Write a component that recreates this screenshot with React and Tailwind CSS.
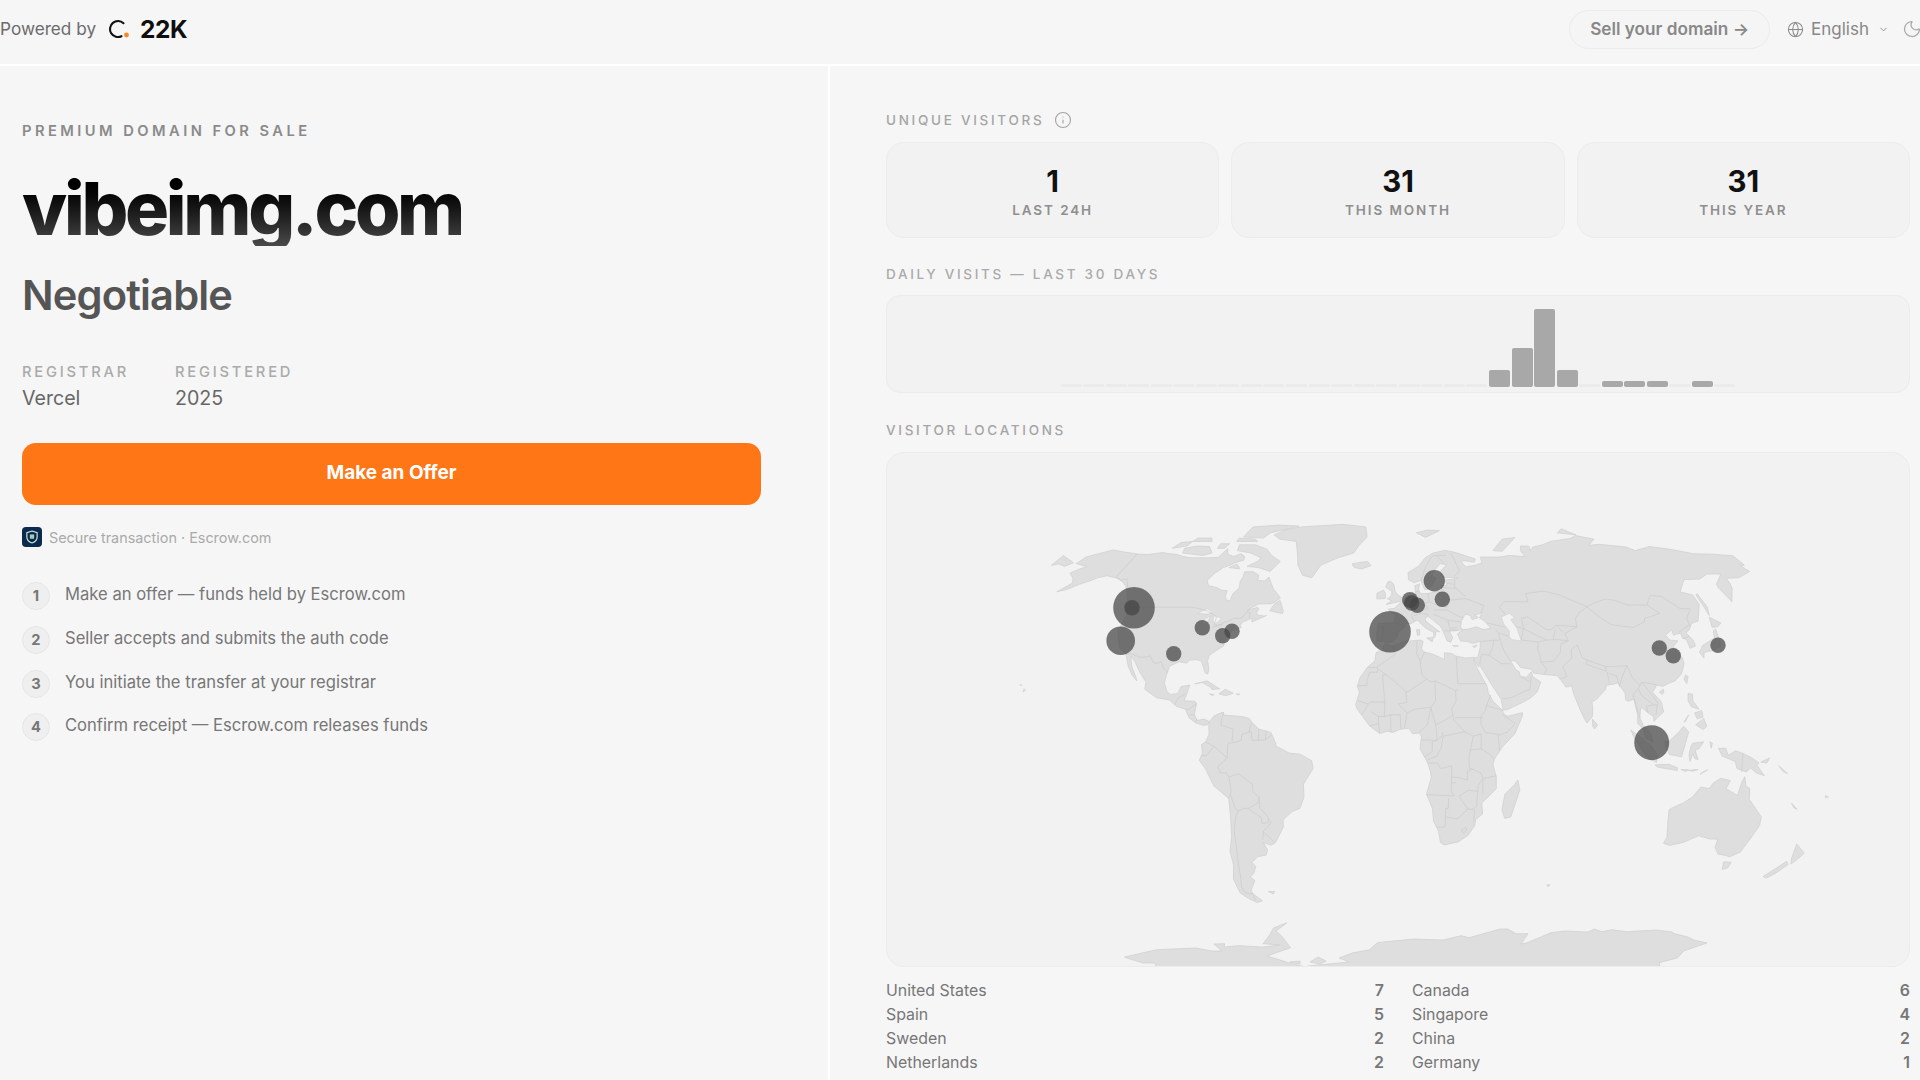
import React from "react";
import { Globe, ChevronDown, Moon, Info } from "lucide-react";

// coastlines as "lon,lat" lists, projected at runtime
const LAND = [
  // North America
  "-168,65.6 -166.8,68.3 -163,69.5 -156.5,71.3 -150,70.5 -141,69.6 -135,69.3 -128,70.2 -124,69.7 -120,69.5 -115,68.5 -110,68 -105,68 -100,68 -96,68.2 -94,71.8 -92,69.5 -88,68.5 -85,69.7 -82,68.5 -81.5,67 -85.5,66 -87,65 -90,64 -93,61.5 -94.5,59 -92.5,57 -88,56.3 -85,55.3 -82.3,55.1 -82,53 -80.5,51.3 -79,51.5 -79,54 -77,56 -78,58.7 -77.5,60.5 -78,62.4 -73.5,62.4 -70,61 -69.5,59 -66,58.8 -64.5,60.3 -62,57.5 -60,55.5 -57,53.5 -55.7,52.3 -59,50.3 -65,50.2 -67,49.3 -69.5,47.8 -65,49 -64.3,48.3 -65,47 -64,46.2 -61,45.8 -60,46 -63.5,44.6 -66,43.7 -66,45 -67,44.8 -70,43.7 -70.7,42.5 -70,41.7 -74,40.6 -75,38.5 -76,37 -75.7,35.3 -78,33.9 -81,32 -81.3,30 -80,27 -80.3,25.3 -81.5,25.9 -82.7,28 -84,30 -86,30.4 -89,30.3 -90,29.2 -93.5,29.7 -97,28 -97.5,25 -97.8,22.3 -96,19 -94.5,18.2 -91.5,18.5 -90.5,21 -87,21.5 -87.7,18.5 -88.5,16 -84,15.8 -83.2,14.9 -83.7,11 -82.3,9 -79.7,9.5 -77.4,8.7 -78,7.5 -80,7.3 -83,8.2 -85.8,10 -87.6,13 -91.5,14 -94.5,16.2 -100,17 -105.5,20 -105.5,22.5 -109,26 -112.5,30 -114.7,31.7 -113,28 -110,24 -109.5,23 -112,25 -114.5,28 -117.1,32.5 -120.6,34.5 -122.5,37.5 -124.3,40.4 -124,46 -124.7,48.4 -123,49 -127,51 -130,54.5 -133,57 -136,58.5 -140,59.8 -146,60.8 -150,60 -152,59 -156,57.5 -160,55.5 -164,54.7 -160,58 -162,59.8 -166,61.8 -164,63.2 -161,64.5",
  // Chukotka, the bit of Russia past the date line
  "-179.9,64.9 -179.9,68.9 -175,67.5 -170,66 -172.5,64.5 -177,65.5",
  // Greenland and the Arctic islands
  "-73,78 -68,80.5 -60,82 -35,83.5 -20,82 -18,77 -22,73 -24,70 -32,68 -40,65 -43,60 -48,61 -52,65 -54,69 -58,75 -68,76",
  "-80,73.5 -72,71.5 -68,69 -62,66.5 -65,62.5 -72,64 -78,64.5 -74,66.5 -73,68 -80,70 -88,71 -89,73.5",
  "-117,70 -105,69 -101,70 -105,72.7 -112,73 -118,72",
  "-125,72 -118,73 -117,75 -123,74.5",
  "-90,77 -78,76.5 -76,79 -65,81.5 -62,82.5 -75,83 -90,82 -90,80",
  "-92,75 -80,75 -82,76 -92,76.5",
  "-117,75 -106,75 -108,76.5 -116,76.5",
  "-100,72 -96,72 -95,74 -100,74",
  "-87,64 -81,63.5 -84,65.5",
  "-59,47.7 -53,46.7 -52.7,47.5 -55.5,51.5 -57.5,50.5",
  "-128,50.5 -123.5,48.5 -125,50",
  "-155.9,19.2 -155,19.6 -155.8,20.2",
  "-158,21.5 -157,21.3 -157.6,21.7",
  "-85,21.9 -80,23 -75,20.5 -74.2,20.2 -77.5,19.9 -78,20.7 -82,22.4",
  "-74.4,18.4 -72,20 -68.4,18.6 -71.5,17.7",
  "-78.3,18.4 -76.3,18.1 -77,17.8",
  "-67.2,18.4 -65.7,18.3 -66.5,18",
  // South America
  "-77.4,8.7 -75.5,10.7 -72,12 -71.5,10.9 -68,10.7 -64,10.4 -61,9.7 -60,8.4 -57,6 -52,4.8 -50,1 -50,0 -44.5,-2.5 -40,-2.9 -35.3,-5.2 -34.8,-8 -39,-13.5 -39,-18 -41,-22 -44.5,-23.2 -48.5,-26 -48.7,-28.5 -53,-34 -55,-34.9 -58.3,-34 -57,-36.5 -58,-38.4 -62,-39 -65,-41 -63.7,-42.5 -65.5,-45 -67.5,-46.2 -65.8,-47.5 -69,-51 -68.4,-52.5 -65.2,-54.9 -68,-55.6 -71.5,-54 -74.5,-52 -75.5,-47 -73.5,-42 -73.5,-37 -71.5,-32 -70.5,-25 -70.3,-18.5 -76,-14 -79,-8 -81.3,-5 -80,-2.5 -80.3,0.5 -78.7,1.5 -77.3,4 -77.5,7",
  "-61,-51.5 -58,-51.5 -59,-52.3",
  // Africa and nearby islands
  "-5.9,35.8 -2,35.2 3,36.8 10,37.3 11,36.9 10.2,34.3 11,33.2 15.2,32.3 19.8,30.5 20,32.8 23,32.6 25,31.6 29,31 32.5,31.2 32.5,29.9 33.8,27 35.5,24 37.2,21 37.5,18.7 39.5,15.5 43.2,12.5 43.3,11.5 45,10.5 51.2,11.8 51,10.4 47.9,4.5 42.5,-0.5 39.5,-4.5 38.9,-6.5 40.4,-11 40.6,-15 36.5,-18.8 34.9,-20 35.5,-24 32.8,-25.9 32.6,-28 30,-31.5 26,-33.8 20,-34.8 18.4,-34 17.3,-30 15,-26.5 14.4,-22 11.8,-17 13.7,-11 13.2,-8.8 12.2,-6 9,-1 9.6,3.5 8.5,4.6 6,4.3 4.4,6.3 1,5.9 -2,4.8 -4.5,5.2 -7.5,4.4 -11.5,7 -13.3,9 -15,11 -16.8,13 -17.5,14.7 -16,19 -17,21 -16,24 -13,27.7 -9.8,30 -9.5,32.8 -6.8,34",
  "49.3,-12 50.4,-15.5 47.5,-25 45,-25.5 43.5,-22.5 44.3,-17 48,-13.7",
  "69,-49 70.5,-49 70,-49.7",
  // Eurasia
  "-9.5,38.8 -8.9,43.2 -1.8,43.4 -1.2,46 -4.6,48.3 -1.6,48.6 1.6,50.9 4,52 5,53.3 8.5,53.8 8.2,57 10.6,57.7 10,55.5 10.8,54 14,54 18.5,54.7 21,55.2 21.2,57 24,57.2 23.5,59.2 28,59.6 30,60 25,60.2 22.5,60 21.5,62.5 25.3,65.2 22,65.6 17.5,62 17.2,60.6 19,59.8 16.5,57 14.3,55.5 12.9,55.5 11.2,59 8,58.1 5.3,59.2 5,62 10.5,64.5 14.5,68 19,70 25.7,71.1 31,70.3 41,67.5 40,66.2 35,66.8 33,66.7 35,64.3 38,64.7 40.5,65 44,66 44,68.3 54,68.3 60,69 68,68.5 67,71 68.5,73 73,72.9 72.5,71 75,72.5 81,73.5 87,75 100,76.4 104.2,77.7 113,76 107,73.3 113.5,73.7 127,72.5 130,71 140,72.7 150,71.6 160,69.7 170,69.5 179.9,68.8 179.9,65 177.5,64.7 179,62.5 170,60 163.5,59.8 163,57.8 162,56 156.7,51 155.6,56 156,57.5 163,61.5 156,61.5 150,59.5 142,59.3 135.5,54.7 140.5,53.5 140.5,50 135.5,44 132,43.2 129.7,41 127.5,39.8 129.4,37 129.3,35.2 126.5,34.4 126.5,37.5 125,38 125,39.7 121.5,39 121.7,40.9 118,39 119,37.3 122.5,37 119.5,35 121.8,31 121.8,29 119.5,25.4 116,22.9 113.5,22.2 110.5,21 108.2,21.5 105.8,19 108.9,15.5 109.3,12 107,10.4 105,8.7 105,10.3 102.5,12 100.9,13.3 100,13.4 99.3,10 100.5,7.2 103.4,4.5 104.2,1.4 101.3,2.8 100.4,6 98.3,8 98.5,11 97.6,16.5 95.3,15.8 94.3,16.2 94.3,18.8 91.9,22.3 90,21.8 87,21.4 86.5,20 82.3,16.6 80.2,15.5 80.3,13 79.8,10.3 77.5,8.1 76.3,10 74.5,14 72.8,19 72.6,21.2 70,20.8 69,22.3 67,24.8 61.6,25.2 57.3,25.7 56.5,27 52,27.7 50,30 48,30 50,26.7 51.2,26.2 51.5,24.5 54,24.2 56.3,26.2 56.7,24.5 59.8,22.5 57.8,19 55,17 52,15.6 45,12.8 43.3,12.7 42.7,16.5 39.2,21.5 36,26.5 35,28 34.9,29.5 34.3,27.8 32.7,29.9 32.4,31.1 34.3,31.3 35.6,34.6 36,36.8 32.5,36.1 30.5,36.7 27.3,37 26.3,39.5 29,41 31.5,41.2 35,42 38,41 41.5,41.5 39,44 37,45.2 38.5,47 35,46.2 36.5,45.3 33.5,44.5 33,46 30.7,46.5 28.6,44 28,41.8 28.9,41.1 26.2,40.6 23.7,40.5 22.8,40.5 24,38.2 23,36.5 21.5,37 19.5,41.5 18.5,42.5 14.5,45.2 13.8,45.6 12.3,45.3 12.5,44 16,41.8 18.5,40.2 17,40.4 16.5,39 15.7,38 15.8,40 12.5,41.4 10.4,43 8.8,44.4 6,43.1 3.2,43.2 3.2,41.9 0,39.8 -0.4,38.5 -2,36.8 -5.4,36.1 -6.4,36.8 -9,37",
  // European and Asian islands
  "-5.5,50 1.3,51.2 1.7,52.7 0,53.5 -1.5,55 -2,57.5 -3.5,58.6 -5,58.5 -6,56.5 -3,54.8 -3,53.4 -5,52 -3,51.4",
  "-6,52.2 -6,54 -7,55.3 -10,54.2 -10,52",
  "-24,65.5 -22.5,64 -18.5,63.5 -14,64.8 -16,66.5 -21,66",
  "11,79 16,76.8 25,80 18,80.3",
  "52,71 57,70.7 68,76.8 60,76",
  "95,79 105,78 100,81",
  "12.5,38 15.5,38.2 15,36.7",
  "8.3,41 9.7,41 9.5,39 8.5,39",
  "23.6,35.4 26.3,35.2 24.8,34.9",
  "32.4,35 34.5,35.6 33.5,34.7",
  "79.8,9.5 81.8,7.5 80.5,6 79.8,7",
  "130,33 131,31 132,33 135.5,33.5 140,35 141,38 141.5,41.3 140,40.5 139,38 136.5,37 132.5,35.4",
  "140.3,41.8 141.5,45.4 145.3,43.3 143,42",
  "142,46 143.5,49 143,54 142,53.5 142,50",
  "121,25 122,24.5 120.8,22 120,23.5",
  "108.7,19 110.5,20 110.5,18.8 109.5,18.2",
  "120.5,18.5 122.3,18.3 122,16 124,13 121,13.8 120,16",
  "122,7.5 125.5,9.7 126.5,7 125,5.8",
  "122,11.7 125,12.5 125.3,10.2 122.8,9.6",
  "117.2,8.4 119.5,11 118,8.8",
  "109,1.5 111,1.8 115,5 117,7 119,5 118,2.5 117.5,1 116,-3.8 111,-3 109.5,-0.5",
  "95.3,5.6 98,4 103.5,0 106,-3 105.8,-5.8 102,-4 99,-0.5 96.5,3",
  "105.2,-6.7 108,-6.5 111,-6.5 114.5,-7.7 114.5,-8.7 106.5,-7.5",
  "119.5,-5.5 120.5,-2.8 121.5,-4.5 122.8,-4.8 121.5,-1.5 123,-1 125,1.5 120.5,1 119.8,0 119,-3",
  "116,-8.3 119,-8.4 118,-9",
  "119,-8.6 123,-8.3 121,-8.9",
  "124,-10 127,-8.4 125,-9.3",
  "127.5,1.5 128.5,1 128,-0.8",
  "131,-0.8 134,-0.8 135,-3.3 138,-1.7 141,-2.6 145,-4.3 147.8,-6 147,-6.8 150.5,-10.5 147,-9.5 144.5,-7.7 143,-9.2 139,-8 138,-5.5 135,-4.4 132.5,-3.5",
  "148.5,-5.7 152,-4.2 151,-6",
  "156,-7 160,-9.8 158,-9",
  // Oceania
  "113.5,-22.5 114,-26 115.6,-32 115,-34.3 118,-35 123.5,-33.9 129,-31.6 134,-32.7 137.8,-32.8 138,-35.6 140.5,-38 144,-38.5 146.3,-39 150,-37.3 151.3,-33.8 153.5,-28 153,-25 149.5,-22 146,-18.8 145.3,-15 143.5,-14 142.5,-10.8 141.5,-13 140.8,-17.5 135.5,-15 136.8,-12.2 132.7,-11.4 130,-13 128.5,-15 125,-14.5 122.2,-18 119,-20 114.2,-22",
  "144.8,-40.8 148.3,-40.9 148,-43 146,-43.5",
  "172.8,-34.5 178.3,-37.7 176.8,-40 175.3,-41.6 174,-39.5",
  "172.7,-40.6 174.2,-41.7 171,-45 168.5,-46.6 166.5,-46 170,-43",
  "164,-20.2 167,-22.3 165.5,-21.8",
  "177.3,-17.5 178.6,-18 177.5,-18.3",
];

// Antarctica is traced in page pixels, it only shows as a strip along the bottom
const ANTARCTICA = [
  "M1124.5 956L1143 951.7L1157 948.7L1196 947L1212 950L1222 950L1214 943L1224.5 942.7L1224.5 946L1239 944.7L1263 946L1279.6 944L1263 942.7L1269 935L1273.5 927L1287 921.7L1276 930L1281.6 935L1290.6 946.7L1267 955L1273.5 957L1292 962.7L1306 966L1308 965L1339 962L1349 960.7L1339 957L1353 951.7L1369 949L1377.5 941.7L1386 940.7L1414 938L1443 939L1461 934.7L1469 936.7L1500 928L1508 928L1516 932.7L1528 932.7L1521 943L1526.5 942L1551 931.7L1565 930L1588 931L1594 928L1602 930.7L1612 928.7L1626.5 930.7L1655 929L1671 930.7L1675.5 933L1688 936L1694 939L1707 942L1683.7 950L1677.5 957L1659 961.7L1661 970L1157 970L1155 962L1143 962L1130 958Z",
  "M1310 961L1318 956L1326 960L1320 963Z",
  "M1290 961L1300 960L1300 963Z",
];

// inland water, filled with the panel colour
const WATER = [
  "47,45.5 51,46.8 53,45.3 51,44.5 53,41.5 54,37 50,37.4 48.9,38.5 49.5,40.5 47.5,43",
  "-92,46.7 -88,48.5 -85,47 -87,46.5",
  "-87.5,42 -86,44 -85,46 -88,44.5",
  "-84,46 -80,45 -82,43 -83.5,44",
  "-83,41.7 -79,42.8 -80,42.5",
];

const BORDERS = [
  "-123,49 -95,49 -89,48 -84.5,46.5 -82.5,45.3 -82.5,42.5 -79,42.8 -79,43.3 -76,44.2 -74.7,45 -71,45 -69.3,47.4 -67.8,47 -67.5,45",
  "-141,69.6 -141,60.3 -137,59 -135,59.7 -130,55",
  "-117.1,32.5 -114.8,32.5 -111,31.3 -108,31.3 -106.5,31.8 -104.5,29.6 -103,29 -101,29.8 -99.5,27.5 -97.2,25.9",
  "-92.2,14.6 -91,17.2 -89.2,17.8 -88.3,18.4",
  "-83.2,15 -86,13 -87.5,13",
  "-83.7,11 -85.7,11",
  "-83,8.3 -82.6,9.5",
  "-71.7,12 -72.5,9 -72.4,7.3 -67.5,6 -67.8,2 -66.9,1.2 -69.5,1 -69.9,-4.2 -74,-1 -75.2,-0.1 -78.7,1.4",
  "-75.2,-0.1 -78.3,-3.4 -80.3,-3.4",
  "-69.9,-4.2 -73.8,-7.3 -73,-9.5 -70.5,-9.5 -69.5,-11 -69,-15 -69.4,-17.5 -70.4,-18.4",
  "-69.4,-17.5 -68.2,-21.5 -67,-23 -68.4,-25 -70,-30 -70.2,-35 -71,-40 -72,-47 -73,-50 -72,-52 -68.4,-52.4",
  "-68.6,-52.6 -68.6,-55",
  "-69.5,-11 -65.4,-9.8 -60,-13.5 -60,-16.2 -57.7,-18 -58.2,-20 -62.6,-22 -64.5,-22 -67,-23",
  "-62.6,-22 -57.6,-25.3 -57.6,-27.3 -55,-27 -54.6,-25.6",
  "-57.7,-18 -57.8,-22 -55.5,-24 -54.6,-25.6 -53.7,-27 -57.6,-30.2 -58.3,-33",
  "-57.6,-30.2 -53.4,-33.8",
  "-60,8.4 -61,5 -60,5 -59.7,2 -57,2 -54.2,2.2 -51.7,4",
  "-60.7,5 -64,4 -64,2 -66.9,1.2",
  "-57,6 -57,2",
  "-54,5.5 -54.2,2.2",
  "-2,35.1 -1.2,32.3 -3.5,31 -8.7,28 -8.7,27.3 -8.7,26 -12,26 -13,23 -13,21.3 -17,21.3",
  "-13,27.7 -8.7,27.7",
  "-4.8,25 -8.7,27.3",
  "-4.8,25 -6.5,25 -5.5,15.5 -11.5,15.5 -12.3,14.8 -16.5,16",
  "-4.8,25 1.2,21 3.3,19 4.2,19.2 12,23.5 10,25.3 9.5,30 8,32.5 8.3,36.9",
  "9.5,30 11.5,33.1",
  "25,31.6 25,22 36.9,22",
  "25,20 24,19.5 15.5,23 14.2,22.6 12,23.5",
  "15.5,23 15.5,16 13.6,13.7 14,12 15.5,7.5 19,9 22.8,11",
  "24,19.5 24,15.7 22,13 23,9 27.4,5 18.5,3.5",
  "13.6,13.7 7,13 3.7,11.7 2.7,6.4",
  "3.3,19 3.6,15.4 0.2,14.9 3.7,11.7",
  "1.2,6 0.9,11 -3,11 -5.5,10.4 -5.5,15.5",
  "-3,11 -2.9,5",
  "-12.3,14.8 -13.7,12.6 -15,11",
  "-11,12 -8,10.5 -8,8 -11.5,7",
  "-5.5,10.4 -8,10.5",
  "-8,8 -7.5,4.4",
  "13.6,13.7 12,7.5 8.5,4.7",
  "9.7,2.2 16,2 15.5,7.5",
  "16,2 18,3.5 18.5,5",
  "23.5,10 33,10 35,10",
  "38.5,18 36.5,14.3 36,12.5 34,10.5 34,7.5 35.9,4.7 41.9,4 45,5 48,8 43,11",
  "36.5,14.3 43,12.6",
  "41,3.9 41.5,-1.7",
  "34,4.2 34,-1 37.6,-3 39.2,-4.7",
  "27.4,5 30.8,3.5 34,4.2",
  "30.8,3.5 29.6,-1.4 29,-4.5 29.3,-8 30.7,-8.2 28.5,-9 28.5,-12 24,-11 22,-11 22,-13 24,-13",
  "34,-1 29.6,-1.4",
  "30.7,-8.2 34,-9.5 34.9,-11.5 40.4,-10.5",
  "12.2,-6 16,-6 17.5,-8 22,-7 22,-11",
  "11,-3.8 14,-2 14,1.5 16,2",
  "12,-5 16,-3.5 17.7,-0.5 18.5,3.5",
  "11.8,-17.2 23.4,-17.6 22,-16 22,-13",
  "21,-18.3 21,-22 20,-22 20,-28.5 16.5,-28.6",
  "20,-25 25,-25.7 29.3,-22.2 25.3,-17.8 29,-15.6 33,-16 32.8,-21 31.3,-22.4 29.3,-22.2",
  "33,-16 33,-14 34.9,-11.5 35,-14.5 35.2,-17",
  "32,-22.3 32,-26.8",
  "27,-29.5 28.7,-28.7 29.4,-29.6 28,-30.6 27,-29.5",
  "34.9,29.5 36,32.3 39,32 44,29 47.7,29",
  "44.8,37 46,33 48,30",
  "36,36.8 42,37.2 44.8,37.3 44.5,39.7 43.5,41",
  "42,37.2 41,34.5 39,32",
  "43.2,16.7 47,17 52,19 55,20 55.5,22 56,24.5",
  "51.5,24.5 55.2,22.7",
  "61.6,25.2 63,27 61,29.5 61,31.5 60.5,34 61.2,36.6 54,37.3",
  "48.9,38.5 44.8,39.7",
  "40,43.4 48,41.8",
  "61,29.5 66.3,29.8 70,33 71,36 74.5,37",
  "61.2,36.6 65,37.3 70,37.5 74.5,37",
  "68.2,23.7 71,24.5 70,28 74.5,31 75,34 78,35.5 79,31 81,30.2 88,28 92,28 97.3,28.3",
  "81,30.2 80,28.8 88,26.4 88,28",
  "88.3,26 88.5,22",
  "92.5,21 92,24.7 89,25.5",
  "92.5,21 94,24 97.3,28.3 98.5,24 101,21.3 100.2,20.3 101,17.8 105.5,14.5 107,14.4",
  "100.2,20.3 97.5,18 98.8,12 99.5,10",
  "101,21.3 102,22.5 108,21.6",
  "102,22.5 105,18.5 107.5,15 107,14.4 106,11",
  "105.5,14.5 102.5,14 102.9,11.7",
  "100.2,6.4 102,6.2",
  "74.5,37 73.7,39.5 80,42 80.5,45 83,47 87.7,49.2 92,45 96,42.7 105,41.7 111,43.7 112,45 119.8,46.7 116,49.8 107,49.8 102,51.5 98,52 92,50.7 87.7,49.2",
  "116,49.8 120,53.3 125,53 130.5,48.5 135,48.4 131,45 130.6,42.4 129,42 124.4,40",
  "125,37.8 128.4,38.6",
  "49,46.3 47,49 50,51 61,51 61,54 70,55 77,53.5 83,51 87.7,49.2",
  "53,42 56,41.3 56,45 59,45.5 66,41 68,41 71,42.5 80,42",
  "54,37.3 55.9,41.3 61,39 65,37.3",
  "71,42.5 73,40",
  "68,37.5 70,41",
  "-8.9,42 -6.5,41.7 -7,37.2",
  "-1.8,43.4 3.2,42.4",
  "2.5,51 6,49.5 8.2,49 7.6,47.6 6,46.2 7.5,43.8",
  "7,45.9 10.4,46.7 13.7,46.5 13.7,45.6",
  "14.2,54 14.8,51 12.2,50.3 13.8,48.7 10,47.5 7.6,47.6",
  "7.2,53.3 6,50.8 2.5,51",
  "8.6,54.9 9.9,54.8",
  "14.8,51 18.8,49.5 22.7,49 24,50.8 23.5,54.3 19.8,54.4",
  "22.8,54.3 21,56",
  "21,56.3 28,56",
  "24,57.9 27.5,57.5",
  "28.2,59.5 27.5,56",
  "23.5,51.5 32,52.2 40,49.6 38,47",
  "28,56 32,53",
  "22.7,48 28,45.5 29.6,45.3",
  "16.5,48 22.7,48",
  "16,46.5 22.5,44.3 28.6,43.7",
  "22.5,44.3 23,41.4 26.3,41.7",
  "20.5,40.5 26.3,41",
  "28,60.5 31.5,62.8 29,69 28.5,70",
  "11.3,59 12.5,61 14,64 18,68.5 20.6,69",
  "24,65.8 20.6,69 25.7,69",
  "141,-2.6 141,-9.2",
];

// natural earth projection, output in page pixels
function project(lon, lat) {
  const l = (lon * Math.PI) / 180;
  const p = (lat * Math.PI) / 180;
  const p2 = p * p;
  const p4 = p2 * p2;
  const fx = l * (0.8707 - 0.131979 * p2 + p4 * (-0.013791 + p4 * (0.003971 * p2 - 0.001529 * p4)));
  const fy = p * (1.007226 + p2 * (0.015085 + p4 * (-0.044475 + 0.028874 * p2 - 0.005916 * p4)));
  return [1398 + 161 * fx, 745 - 161 * fy];
}

function toPath(line, close) {
  const pts = line.split(" ").map((s) => {
    const [lon, lat] = s.split(",").map(Number);
    return project(lon, lat).map((n) => n.toFixed(1)).join(" ");
  });
  return "M" + pts.join("L") + (close ? "Z" : "");
}

const MARKERS = [
  [1134, 606.7, 20.8],
  [1132, 606.7, 7.7],
  [1120.7, 639.7, 14.3],
  [1202.3, 626.7, 7.7],
  [1222.7, 634.7, 7.7],
  [1232, 630.3, 7.7],
  [1173.7, 652.7, 7.7],
  [1390, 630.7, 20.8],
  [1434.3, 579.7, 10.7],
  [1442.3, 598.3, 7.7],
  [1410, 599, 8],
  [1411.7, 602, 7.7],
  [1417.3, 604.3, 7.7],
  [1651.7, 741.7, 17.5],
  [1659.3, 647, 7.7],
  [1673.3, 654.7, 7.7],
  [1718, 644.3, 7.7],
];

const STEPS = [
  "Make an offer — funds held by Escrow.com",
  "Seller accepts and submits the auth code",
  "You initiate the transfer at your registrar",
  "Confirm receipt — Escrow.com releases funds",
];

const STATS = [
  ["1", "LAST 24H"],
  ["31", "THIS MONTH"],
  ["31", "THIS YEAR"],
];

// height per day, 0 means no visits
const DAYS = [0, 0, 0, 0, 0, 0, 0, 0, 0, 0, 0, 0, 0, 0, 0, 0, 0, 0, 0, 17, 39.5, 78, 17, 0, 6, 6, 6, 0, 6, 0];

const COUNTRIES = [
  ["United States", 7],
  ["Canada", 6],
  ["Spain", 5],
  ["Singapore", 4],
  ["Sweden", 2],
  ["China", 2],
  ["Netherlands", 2],
  ["Germany", 1],
];

function WorldMap() {
  return (
    <svg viewBox="887 452 1022 513" className="block w-full h-full">
      <g fill="#dedede" stroke="#cfcfcf" strokeWidth="0.7" strokeLinejoin="round">
        {LAND.map((line, i) => (
          <path key={i} d={toPath(line, true)} />
        ))}
        {ANTARCTICA.map((d, i) => (
          <path key={i} d={d} />
        ))}
      </g>
      <g fill="#f2f2f2" stroke="#cfcfcf" strokeWidth="0.6">
        {WATER.map((line, i) => (
          <path key={i} d={toPath(line, true)} />
        ))}
      </g>
      <g fill="none" stroke="#cbcbcb" strokeWidth="0.7" strokeLinejoin="round">
        {BORDERS.map((line, i) => (
          <path key={i} d={toPath(line, false)} />
        ))}
      </g>
      <g fill="#444444" fillOpacity="0.72">
        {MARKERS.map(([x, y, r], i) => (
          <circle key={i} cx={x} cy={y} r={r} />
        ))}
      </g>
    </svg>
  );
}

export default function App() {
  return (
    <div className="h-screen w-full overflow-hidden bg-[#f6f6f6] text-[#777] font-['Inter',sans-serif]">
      {/* Header */}
      <header className="h-[66px] pb-[6px] flex items-center justify-between border-b-2 border-white">
        <div className="flex items-center">
          <span className="text-[17.2px] text-[#6b6b6b]">Powered by</span>
          <svg viewBox="0 0 22 20" className="w-[22px] h-[20px] ml-[12px]">
            <path d="M15.5 4.2A8 8 0 1 0 13.5 17.2" fill="none" stroke="#111" strokeWidth="2.1" strokeLinecap="round" />
            <circle cx="18.5" cy="16" r="2.4" fill="#f58a23" />
          </svg>
          <span className="ml-[10px] text-[24.5px] font-bold tracking-[-0.02em] text-[#0f0f0f]">22K</span>
        </div>
        <div className="flex items-center -mr-[2px]">
          <div className="h-[39px] px-[20px] flex items-center rounded-full border border-[#ececec] bg-[#f5f5f5] text-[17.2px] font-semibold text-[#888]">
            Sell your domain →
          </div>
          <Globe className="w-[17px] h-[17px] ml-[17px] text-[#8a8a8a]" strokeWidth={1.5} />
          <span className="ml-[7px] mt-[1px] text-[17px] text-[#888]">English</span>
          <ChevronDown className="w-[11px] h-[11px] ml-[9px] text-[#888]" strokeWidth={2} />
          <Moon className="w-[20px] h-[20px] ml-[13px] text-[#aaa]" strokeWidth={1.5} />
        </div>
      </header>

      <div className="flex">
        {/* Left column */}
        <div className="w-[830px] h-[1014px] shrink-0 border-r-2 border-white pl-[22px] pt-[54px]">
          <p className="text-[14.7px] font-semibold tracking-[0.235em] text-[#8a8a8a]">PREMIUM DOMAIN FOR SALE</p>
          <h1 className="mt-[30px] w-fit text-[73.5px] leading-none font-extrabold tracking-[-0.045em] bg-gradient-to-b from-black to-[#4a4a4a] bg-clip-text text-transparent">
            vibeimg.com
          </h1>
          <p className="mt-[19px] text-[41.6px] leading-[60px] font-semibold tracking-[-0.02em] text-[#555]">Negotiable</p>
          <div className="mt-[37px] flex gap-[46px]">
            <div>
              <p className="text-[14.7px] leading-[20px] font-medium tracking-[0.19em] text-[#aaa]">REGISTRAR</p>
              <p className="mt-[3px] text-[19.6px] leading-[26px] text-[#666]">Vercel</p>
            </div>
            <div>
              <p className="text-[14.7px] leading-[20px] font-medium tracking-[0.19em] text-[#aaa]">REGISTERED</p>
              <p className="mt-[3px] text-[19.6px] leading-[26px] text-[#666]">2025</p>
            </div>
          </div>
          <button className="mt-[32px] w-[739px] h-[62px] rounded-[14px] bg-[#fe7616] text-[19px] font-bold text-white">
            Make an Offer
          </button>
          <div className="mt-[22px] flex items-center gap-[7px]">
            <div className="w-[20px] h-[20px] rounded-[4px] bg-[#0b2b4c] flex items-center justify-center">
              <svg viewBox="0 0 14 16" className="w-[12px] h-[14px]">
                <path d="M7 1L13 3V8C13 11.5 10 14 7 15C4 14 1 11.5 1 8V3Z" fill="none" stroke="#dfe7ee" strokeWidth="1.3" />
                <path d="M4.5 5H9.5V10H4.5Z" fill="#9fd0b8" />
              </svg>
            </div>
            <span className="text-[14.4px] text-[#aaa]">Secure transaction · Escrow.com</span>
          </div>
          <ul className="mt-[34px] flex flex-col gap-[15.7px]">
            {STEPS.map((step, i) => (
              <li key={step} className="flex items-start gap-[15px]">
                <span className="w-[28px] h-[28px] shrink-0 rounded-full border border-[#e6e6e6] bg-[#efefef] flex items-center justify-center text-[14.7px] font-bold text-[#777]">
                  {i + 1}
                </span>
                <span className="-mt-[2px] text-[16.6px] leading-[28px] text-[#777]">{step}</span>
              </li>
            ))}
          </ul>
        </div>

        {/* Right column */}
        <div className="flex-1 pl-[56px] pr-[10px] pt-[44px]">
          <div className="flex items-center gap-[10px] h-[20px]">
            <p className="text-[13.5px] font-medium tracking-[0.2em] text-[#a5a5a5]">UNIQUE VISITORS</p>
            <Info className="w-[18px] h-[18px] text-[#a5a5a5]" strokeWidth={1.5} />
          </div>
          <div className="mt-[12px] grid grid-cols-3 gap-[12px]">
            {STATS.map(([value, label]) => (
              <div key={label} className="h-[96px] pt-[2px] rounded-[18px] border border-[#ececec] bg-[#f2f2f2] flex flex-col items-center justify-center">
                <span className="text-[29.4px] leading-[36px] font-bold text-[#111]">{value}</span>
                <span className="mt-[1px] text-[13.5px] leading-[18px] font-semibold tracking-[0.14em] text-[#8f8f8f]">{label}</span>
              </div>
            ))}
          </div>

          <p className="mt-[26px] text-[13.5px] leading-[20px] font-medium tracking-[0.2em] text-[#aaa]">DAILY VISITS — LAST 30 DAYS</p>
          <div className="mt-[11px] h-[98px] rounded-[14px] border border-[#ececec] bg-[#f2f2f2] flex items-end justify-center gap-[1.55px] pb-[5px]">
            {DAYS.map((h, i) =>
              h > 0 ? (
                <div key={i} className="w-[21px] rounded-[2px] bg-[#a8a8a8]" style={{ height: h }} />
              ) : (
                <div key={i} className="w-[21px] h-[3px] rounded-[1px] bg-[#ebebeb]" />
              )
            )}
          </div>

          <p className="mt-[27px] text-[13.5px] leading-[20px] font-medium tracking-[0.2em] text-[#a5a5a5]">VISITOR LOCATIONS</p>
          <div className="mt-[12px] h-[515px] rounded-[18px] border border-[#ececec] bg-[#f2f2f2] overflow-hidden">
            <WorldMap />
          </div>

          <div className="mt-[12px] grid grid-cols-2 gap-x-[28px]">
            {COUNTRIES.map(([name, count]) => (
              <div key={name} className="h-[24px] flex items-center justify-between text-[15.9px]">
                <span className="text-[#777]">{name}</span>
                <span className="font-semibold text-[#777]">{count}</span>
              </div>
            ))}
          </div>
        </div>
      </div>
    </div>
  );
}
